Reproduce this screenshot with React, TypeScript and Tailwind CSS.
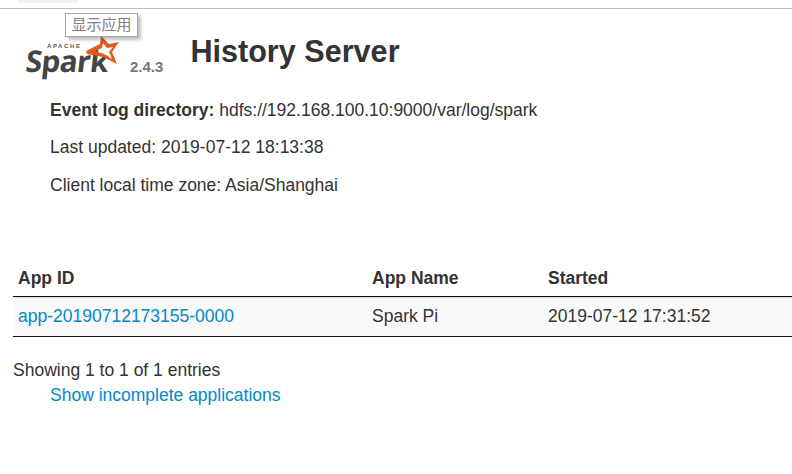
export default function App() {
  return (
    <div className="relative w-[792px] h-[474px] overflow-hidden bg-white text-[#333] text-[17.5px] leading-[25px]" style={{ fontFamily: '"Liberation Sans", Arial, sans-serif' }}>
      <div className="h-[9px] border-b border-[#bdbdbd]">
        <div className="ml-[17px] w-[61px] h-[3px] rounded-b-[6px] bg-[#f1f1f1]" />
      </div>
      <div className="absolute left-[65px] top-[13px] w-[73px] h-[24px] bg-white/85 border border-[#a8a8a8] shadow-[3px_3px_3px_rgba(0,0,0,0.25)] text-[#808080] text-[15px] leading-[21px] text-center z-10" style={{ fontFamily: '"Liberation Sans", "Noto Sans CJK SC", sans-serif' }}>显示应用</div>

      <div className="flex items-start h-[76px]">
        <div className="relative ml-[25px] mt-[20px] w-[105px] h-[50px]">
          <span className="absolute left-[1px] top-[12px] text-[30px] leading-[40px] font-bold tracking-[-0.8px] text-[#444]" style={{ fontFamily: '"Open Sans", sans-serif', transform: 'skewX(-6deg)' }}>Spark</span>
          <span className="absolute left-[22px] top-[13px] text-[6px] leading-[8px] font-bold tracking-[1.6px] text-[#555]">APACHE</span>
          <svg className="absolute left-[60px] top-[7px]" width="36" height="29" viewBox="0 0 36 29">
            <path d="M1 15 L15 8 L16 0 L24 8 L34 6 L27 16 L32 28 L18 21 L2 18 Z M10 15 L17 12 L18 7 L22 12 L28 11 L24 16 L27 23 L19 18 Z" fill="#e25a1c" fillRule="evenodd" />
          </svg>
        </div>
        <span className="mt-[48px] text-[15px] leading-[20px] font-bold text-[#777]">2.4.3</span>
        <h1 className="ml-[27px] mt-[26px] text-[30.6px] leading-[33px] font-bold text-[#333]">History Server</h1>
      </div>

      <div className="ml-[50px] mt-[12.75px] flex flex-col gap-[12.5px]">
        <div><strong>Event log directory:</strong> hdfs://192.168.100.10:9000/var/log/spark</div>
        <div>Last updated: 2019-07-12 18:13:38</div>
        <div>Client local time zone: Asia/Shanghai</div>
      </div>

      <div className="ml-[13px] mt-[60.25px]">
        <div className="flex h-[39px] items-center font-bold border-b border-[#111] pt-[2px]">
          <div className="w-[359px] pl-[5px]">App ID</div>
          <div className="w-[176px]">App Name</div>
          <div>Started</div>
        </div>
        <div className="flex h-[40px] items-center pb-[2px] bg-[#f9f9f9] border-b border-[#111] border-t border-t-[#ddd]">
          <a className="block w-[359px] pl-[5px] text-[#0088cc]">app-20190712173155-0000</a>
          <div className="w-[176px]">Spark Pi</div>
          <div>2019-07-12 17:31:52</div>
        </div>
        <div className="mt-[21px]">Showing 1 to 1 of 1 entries</div>
        <a className="block ml-[37px] text-[#0088cc]">Show incomplete applications</a>
      </div>
    </div>
  );
}
